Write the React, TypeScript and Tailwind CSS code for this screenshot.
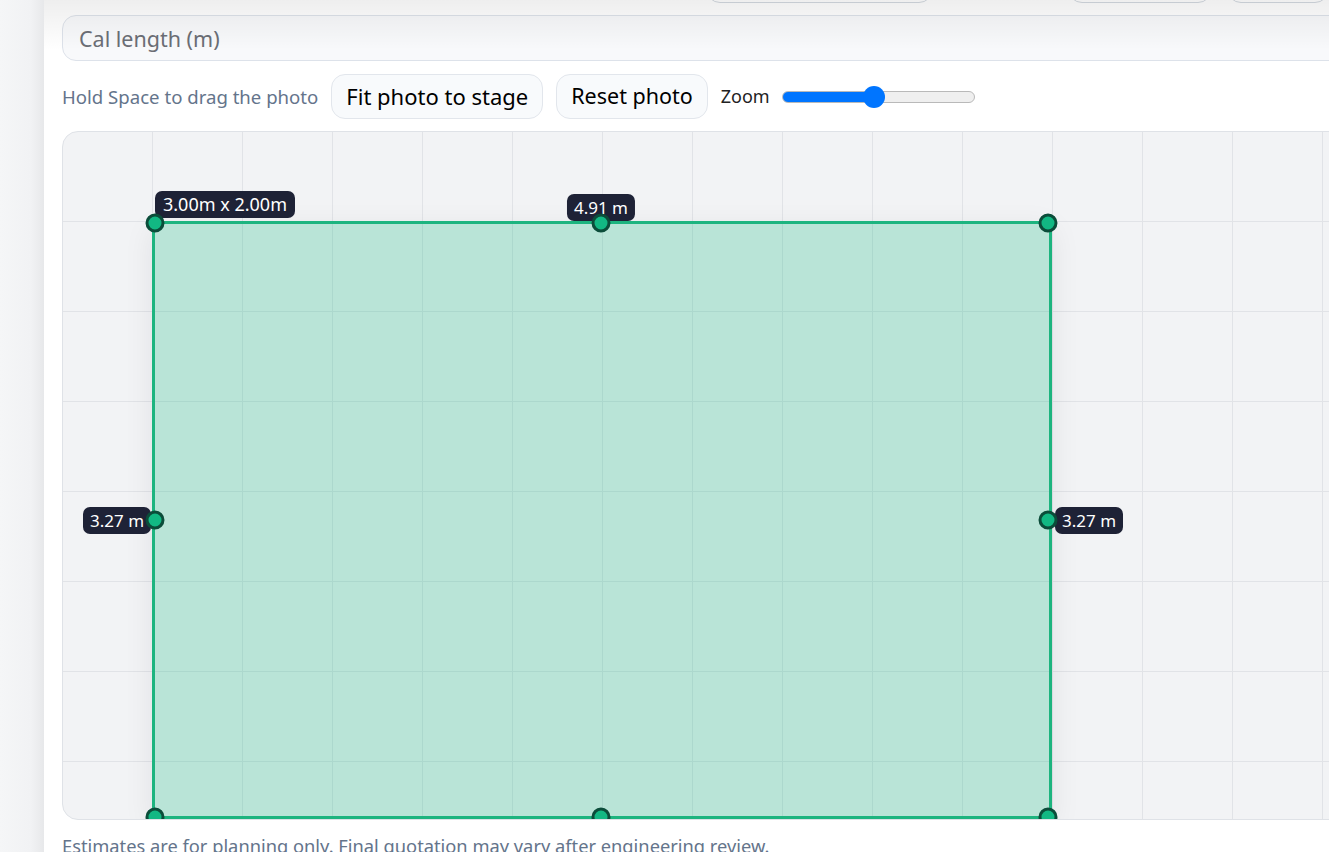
import React from "react";

type Handle = { x: number; y: number };
type Tag = { text: string; className: string };

// handle centres inside the stage, in px from the stage's padding box
const handles: Handle[] = [
  { x: 92, y: 91 },
  { x: 538, y: 91 },
  { x: 985, y: 91 },
  { x: 92, y: 388 },
  { x: 985, y: 388 },
  { x: 92, y: 685 },
  { x: 538, y: 685 },
  { x: 985, y: 685 },
];

const tags: Tag[] = [
  { text: "3.00m x 2.00m", className: "left-[92px] top-[59px] text-[18px] px-[8px]" },
  { text: "4.91 m", className: "left-[538px] top-[62px] -translate-x-1/2" },
  { text: "3.27 m", className: "left-[20px] top-[375px]" },
  { text: "3.27 m", className: "left-[992px] top-[375px]" },
];

function Stage() {
  return (
    <div className="relative h-[689px] w-[1300px] shrink-0 overflow-hidden rounded-[16px] border border-[#dfe2e7] bg-[#f2f3f5] bg-[linear-gradient(to_right,#e1e3e7_1px,transparent_1px),linear-gradient(to_bottom,#e1e3e7_1px,transparent_1px)] bg-[size:90px_90px] bg-[position:89px_89px]">
      {/* area */}
      <div className="absolute left-[89px] top-[89px] h-[598px] w-[900px] border-[3px] border-[#1db47f] bg-[#10b981]/25 shadow-[0_8px_28px_rgba(15,23,42,0.08)]" />

      {tags.map((t, i) => (
        <span
          key={i}
          className={`absolute rounded-[7px] bg-[#1e2236] px-[7px] py-[2px] text-[17px] leading-[23px] text-white ${t.className}`}
        >
          {t.text}
        </span>
      ))}

      {handles.map((h, i) => (
        <span
          key={i}
          className="absolute size-[19px] -translate-x-1/2 -translate-y-1/2 rounded-full border-[3px] border-[#0b4d3a] bg-[#12b883]"
          style={{ left: h.x, top: h.y }}
        />
      ))}
    </div>
  );
}

export default function App() {
  return (
    <div className="flex h-[852px] w-[1329px] overflow-hidden bg-[#f3f4f6] font-['Noto_Sans',sans-serif]">
      <aside className="w-[44px] shrink-0 bg-[linear-gradient(to_right,#f5f6f7,#f1f2f4_70%,#e7e8ea)]" />

      <main className="relative flex min-w-0 flex-1 flex-col bg-white pl-[18px]">
        <div className="pointer-events-none absolute inset-x-0 top-0 z-10 h-[50px] bg-[linear-gradient(to_bottom,rgba(0,0,0,0.065),rgba(0,0,0,0))]" />

        <div className="-mt-[40px] flex h-[43px] shrink-0 gap-[15px] pl-[644px]">
          <div className="w-[269px] rounded-[14px] border border-[#d3d9e0] bg-white" />
          <div className="ml-[120px] w-[170px] rounded-[14px] border border-[#d3d9e0] bg-white" />
          <div className="w-[120px] rounded-[14px] border border-[#d3d9e0] bg-white" />
        </div>

        <input
          placeholder="Cal length (m)"
          className="mt-[12px] h-[46px] w-[1300px] shrink-0 rounded-[14px] border border-[#dde2ea] bg-[#f8f9fb] px-[16px] text-[21.5px] text-gray-800 outline-none placeholder:text-[#6b6e75]"
        />

        <div className="mt-[13px] flex h-[45px] shrink-0 items-center gap-[13px]">
          <span className="text-[18.6px] text-[#64748b]">Hold Space to drag the photo</span>
          <button className="h-[45px] rounded-[14px] border border-[#e2e6ec] bg-[#f8fafc] px-[14px] text-[22px] text-black">
            Fit photo to stage
          </button>
          <button className="h-[45px] rounded-[14px] border border-[#e2e6ec] bg-[#f8fafc] px-[14px] text-[21.5px] text-black">
            Reset photo
          </button>
          <label className="flex items-center gap-[12px] text-[18px] text-[#222]">
            Zoom
            <span className="relative flex h-[22px] w-[193px] items-center">
              <span className="h-[12px] w-full rounded-full border border-[#b9b9b9] bg-[linear-gradient(to_right,#0075ff_50%,#efefef_50%)]" />
              <span className="absolute left-[81px] size-[22px] rounded-full bg-[#0075ff]" />
            </span>
          </label>
        </div>

        <div className="mt-[12px]">
          <Stage />
        </div>

        <p className="mt-[12px] text-[18.3px] text-[#64748b]">
          Estimates are for planning only. Final quotation may vary after engineering review.
        </p>
      </main>
    </div>
  );
}
